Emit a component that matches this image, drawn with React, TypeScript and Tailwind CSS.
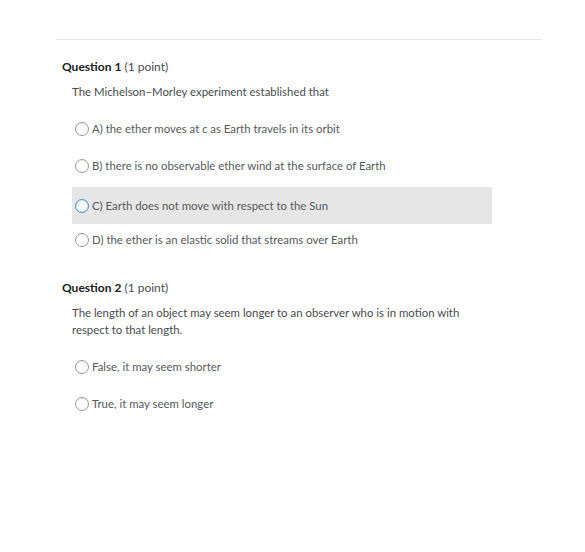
import React from "react";

type Question = {
  num: number;
  points: string;
  prompt: React.ReactNode;
  options: React.ReactNode[];
  hovered?: number;
};

const questions: Question[] = [
  {
    num: 1,
    points: "(1 point)",
    prompt: "The Michelson\u2013Morley experiment established that",
    options: [
      <>A) the ether moves at <i>c</i> as Earth travels in its orbit</>,
      "B) there is no observable ether wind at the surface of Earth",
      "C) Earth does not move with respect to the Sun",
      "D) the ether is an elastic solid that streams over Earth",
    ],
    hovered: 2,
  },
  {
    num: 2,
    points: "(1 point)",
    prompt:
      "The length of an object may seem longer to an observer who is in motion with respect to that length.",
    options: ["False, it may seem shorter", "True, it may seem longer"],
  },
];

function Radio({ active }: { active?: boolean }) {
  return (
    <span
      className={
        "inline-block w-[14px] h-[14px] rounded-full bg-white border shrink-0 " +
        (active ? "border-[#4a90d9] shadow-[inset_0_0_1px_#4a90d9]" : "border-[#9a9a9a] shadow-[inset_0_1px_1px_rgba(0,0,0,0.08)]")
      }
    />
  );
}

export default function App() {
  return (
    <div className="min-h-[552px] bg-white font-['Lato','Liberation_Sans',sans-serif] pt-[39px]">
      <div className="ml-[56px] w-[486px] border-t border-[#e6e6e6]" />
      <div className="ml-[62px] mt-[19px]">
        {questions.map((q, qi) => (
          <div key={q.num} className={qi > 0 ? "mt-[22px]" : ""}>
            <div className="text-[12px] leading-[16px] text-[#202122]">
              <span className="font-bold">Question {q.num}</span>{" "}
              <span className="text-[#494c4e]">{q.points}</span>
            </div>
            <p className="ml-[10px] mt-[8px] w-[420px] text-[11.4px] leading-[17px] text-[#494c4e]">
              {q.prompt}
            </p>
            <div className="ml-[10px] mt-[10px] w-[420px]">
              {q.options.map((opt, oi) => (
                <div
                  key={oi}
                  className={
                    "flex items-center gap-[3px] h-[37px] pl-[3px] text-[11.4px] text-[#565a5c] " +
                    (q.hovered === oi ? "bg-[#e6e6e6] mt-[3px] -mb-[3px]" : "")
                  }
                >
                  <Radio active={q.hovered === oi} />
                  <span>{opt}</span>
                </div>
              ))}
            </div>
          </div>
        ))}
      </div>
    </div>
  );
}
